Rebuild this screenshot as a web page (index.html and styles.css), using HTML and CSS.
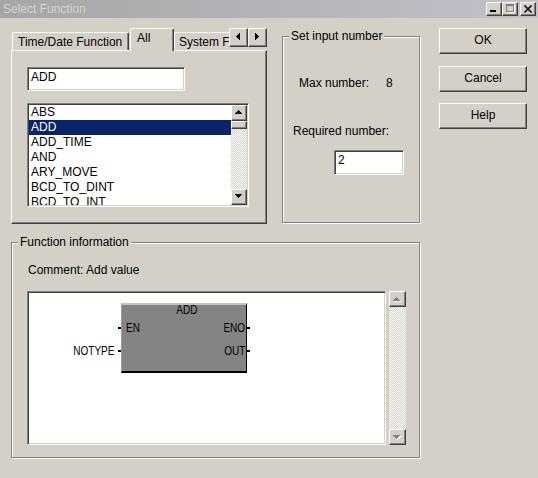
FILE: index.html
```html
<!DOCTYPE html>
<html>
<head>
<meta charset="utf-8">
<title>Select Function</title>
<link rel="stylesheet" href="styles.css">
</head>
<body>
<div class="titlebar">
  <span class="title">Select Function</span>
  <div class="tbtns">
    <span class="tbtn raised"><svg width="14" height="12" shape-rendering="crispEdges"><rect x="3" y="7" width="6" height="2" fill="#000"/></svg></span>
    <span class="tbtn raised"><svg width="14" height="12" shape-rendering="crispEdges"><rect x="4" y="2" width="8" height="1" fill="#fff"/><rect x="11" y="2" width="1" height="8" fill="#fff"/><rect x="4" y="9" width="8" height="1" fill="#fff"/><rect x="3" y="1" width="8" height="2" fill="#808080"/><rect x="3" y="1" width="1" height="8" fill="#808080"/><rect x="10" y="1" width="1" height="8" fill="#808080"/><rect x="3" y="8" width="8" height="1" fill="#808080"/></svg></span>
    <span class="tbtn raised close"><svg width="14" height="12"><path d="M3.5 2.5 L10.5 9.5 M10.5 2.5 L3.5 9.5" stroke="#000" stroke-width="1.6" fill="none"/></svg></span>
  </div>
</div>
<div class="client">
  <div class="leftcol">
    <div class="toprow">
      <div class="tabs">
        <div class="tabstrip">
          <div class="tab t1">Time/Date Function</div>
          <div class="tab t2">All</div>
          <div class="tab t3">System F</div>
          <div class="tabarrow raised"><svg width="17" height="17" shape-rendering="crispEdges"><rect x="6" y="7" width="1" height="1"/><rect x="7" y="6" width="1" height="3"/><rect x="8" y="5" width="1" height="5"/><rect x="9" y="4" width="1" height="7"/></svg></div>
          <div class="tabarrow raised"><svg width="17" height="17" shape-rendering="crispEdges"><rect x="6" y="4" width="1" height="7"/><rect x="7" y="5" width="1" height="5"/><rect x="8" y="6" width="1" height="3"/><rect x="9" y="7" width="1" height="1"/></svg></div>
        </div>
        <div class="tabpanel">
          <div class="edit sunken">ADD</div>
          <div class="listbox sunken">
            <ul class="items">
              <li>ABS</li>
              <li class="sel">ADD</li>
              <li>ADD_TIME</li>
              <li>AND</li>
              <li>ARY_MOVE</li>
              <li>BCD_TO_DINT</li>
              <li>BCD_TO_INT</li>
            </ul>
            <div class="vscroll">
              <div class="sbbtn raised"><svg width="14" height="14" shape-rendering="crispEdges"><rect x="6" y="4" width="1" height="1"/><rect x="5" y="5" width="3" height="1"/><rect x="4" y="6" width="5" height="1"/><rect x="3" y="7" width="7" height="1"/></svg></div>
              <div class="thumb raised"></div>
              <div class="track"></div>
              <div class="sbbtn raised"><svg width="14" height="14" shape-rendering="crispEdges"><rect x="3" y="4" width="7" height="1"/><rect x="4" y="5" width="5" height="1"/><rect x="5" y="6" width="3" height="1"/><rect x="6" y="7" width="1" height="1"/></svg></div>
            </div>
          </div>
        </div>
      </div>
      <div class="group setinput">
        <div class="legend">Set input number</div>
        <div class="maxrow"><span class="maxlbl">Max number:</span><span>8</span></div>
        <div class="reqlbl">Required number:</div>
        <div class="numedit sunken">2</div>
      </div>
    </div>
    <div class="group funcinfo">
      <div class="legend">Function information</div>
      <div class="comment">Comment: Add value</div>
      <div class="diagrow">
        <div class="diagram sunken">
          <div class="node">
            <span class="nlabel ntitle">ADD</span>
            <span class="nlabel nin1">EN</span>
            <span class="nlabel nout1">ENO</span>
            <span class="nlabel nout2">OUT</span>
            <span class="nlabel nvar">NOTYPE</span>
            <span class="pin pl p1"></span>
            <span class="pin pl p2"></span>
            <span class="pin pr p1"></span>
            <span class="pin pr p2"></span>
          </div>
        </div>
        <div class="dscroll">
          <div class="dbtn raised"><svg width="15" height="14" shape-rendering="crispEdges"><g fill="#fff"><rect x="7" y="6" width="1" height="1"/><rect x="6" y="7" width="3" height="1"/><rect x="5" y="8" width="5" height="1"/><rect x="4" y="9" width="7" height="1"/></g><g fill="#808080"><rect x="6" y="5" width="1" height="1"/><rect x="5" y="6" width="3" height="1"/><rect x="4" y="7" width="5" height="1"/><rect x="3" y="8" width="7" height="1"/></g></svg></div>
          <div class="track"></div>
          <div class="dbtn raised"><svg width="15" height="14" shape-rendering="crispEdges"><g fill="#fff"><rect x="4" y="6" width="7" height="1"/><rect x="5" y="7" width="5" height="1"/><rect x="6" y="8" width="3" height="1"/><rect x="7" y="9" width="1" height="1"/></g><g fill="#808080"><rect x="3" y="5" width="7" height="1"/><rect x="4" y="6" width="5" height="1"/><rect x="5" y="7" width="3" height="1"/><rect x="6" y="8" width="1" height="1"/></g></svg></div>
        </div>
      </div>
    </div>
  </div>
  <div class="buttons">
    <div class="btn raised">OK</div>
    <div class="btn raised cancel">Cancel</div>
    <div class="btn raised help">Help</div>
  </div>
</div>
</body>
</html>
```
FILE: styles.css
```css
* { box-sizing: border-box; }
html, body { margin: 0; padding: 0; }
body {
  width: 538px;
  height: 478px;
  overflow: hidden;
  background: #d4d0c8;
  font-family: "Liberation Sans", Arial, sans-serif;
  font-size: 12px;
  line-height: 14px;
  color: #000;
}
svg { display: block; }

.raised {
  background: #d4d0c8;
  border: 1px solid;
  border-color: #fff #404040 #404040 #fff;
  box-shadow: inset -1px -1px 0 #808080;
}
.sunken {
  background: #fff;
  border: 1px solid;
  border-color: #808080 #fff #fff #808080;
  box-shadow: inset 1px 1px 0 #404040, inset -1px -1px 0 #d4d0c8;
}

/* title bar */
.titlebar {
  height: 18px;
  display: flex;
  justify-content: space-between;
  align-items: flex-start;
  background: linear-gradient(90deg, #a6a6a6, #c2c0ca);
}
.title { color: #d8d4cc; padding-left: 3px; line-height: 18px; }
.tbtns { display: flex; margin: 2px 2px 0 0; }
.tbtn { width: 16px; height: 14px; }
.tbtn.close { margin-left: 2px; }

/* client */
.client { display: flex; padding: 10px 0 0 11px; }
.leftcol { width: 409px; }
.toprow { display: flex; align-items: flex-start; }

/* tabs */
.tabs { width: 256px; }
.tabstrip { display: flex; align-items: flex-end; height: 22px; }
.tab {
  height: 18px;
  border: 1px solid #fff;
  border-bottom: none;
  border-right-color: #404040;
  box-shadow: inset -1px 0 0 #808080;
  border-radius: 2px 2px 0 0;
  padding: 2px 0 0 5px;
  white-space: nowrap;
  overflow: hidden;
}
.t1 { margin-left: 1px; width: 117px; }
.t2 {
  margin-left: 1px;
  width: 44px;
  height: 23px;
  margin-bottom: -1px;
  position: relative;
  z-index: 1;
  background: #d4d0c8;
  padding: 2px 0 0 6px;
}
.t3 { width: 55px; border-right: none; box-shadow: none; padding-left: 4px; border-radius: 2px 0 0 0; }
.tabarrow { width: 19px; height: 19px; align-self: flex-start; flex: none; }

.tabpanel {
  height: 174px;
  border: 1px solid;
  border-color: #fff #404040 #404040 #fff;
  box-shadow: inset -1px -1px 0 #808080;
  padding: 16px 0 0 15px;
}
.edit { width: 158px; height: 24px; padding: 2px 3px 0; }
.listbox {
  margin-top: 12px;
  width: 222px;
  height: 104px;
  padding: 1px;
  display: flex;
}
.items {
  flex: 1;
  list-style: none;
  margin: 0;
  padding: 0;
  overflow: hidden;
}
.items li { height: 15px; line-height: 15px; padding-left: 2px; white-space: nowrap; }
.items li.sel { background: #0a246a; color: #fff; }

.vscroll { width: 16px; display: flex; flex-direction: column; flex: none; }
.sbbtn { height: 16px; flex: none; }
.thumb { height: 8px; flex: none; }
.track {
  flex: 1;
  background-color: #fff;
  background-image: repeating-conic-gradient(#d4d0c8 0 25%, #fff 0 50%);
  background-size: 2px 2px;
}

/* group boxes */
.group {
  border: 1px solid #808080;
  box-shadow: inset 1px 1px 0 #fff, 1px 1px 0 #fff;
}
.legend {
  width: fit-content;
  margin: -8px 0 0 6px;
  padding: 0 2px;
  background: #d4d0c8;
  line-height: 14px;
  position: relative;
}
.setinput { margin: 8px 0 0 15px; width: 138px; height: 187px; }
.maxrow { display: flex; margin: 33px 0 0 16px; }
.maxlbl { width: 87px; }
.reqlbl { margin: 34px 0 0 10px; }
.numedit { margin: 12px 0 0 51px; width: 70px; height: 25px; padding: 2px 3px 0; }

.funcinfo { margin-top: 18px; width: 409px; height: 216px; }
.comment { margin: 14px 0 0 16px; }
.diagrow { display: flex; margin: 14px 0 0 15px; }
.diagram { width: 359px; height: 154px; position: relative; }
.dscroll { margin-left: 3px; width: 17px; height: 154px; display: flex; flex-direction: column; }
.dbtn { height: 16px; flex: none; }

/* function block */
.node {
  position: absolute;
  left: 93px;
  top: 11px;
  width: 126px;
  height: 70px;
  background: #848484;
  border-top: 2px solid #c4c4c4;
  border-left: 1px solid #9a9a9a;
  border-right: 1px solid #000;
  border-bottom: 2px solid #000;
  font-family: "Liberation Sans", Arial, sans-serif;
  font-size: 12.5px;
  line-height: 15px;
}
.nlabel { position: absolute; white-space: nowrap; transform: scaleX(0.8); }
.ntitle { top: -2px; left: 0; right: 0; text-align: center; padding-left: 4px; transform-origin: 55% 50%; }
.nin1 { top: 16px; left: 4px; transform-origin: 0 50%; }
.nout1 { top: 16px; right: 1px; transform-origin: 100% 50%; }
.nout2 { top: 39px; right: 1px; transform-origin: 100% 50%; }
.nvar { top: 39px; right: calc(100% + 8px); transform-origin: 100% 50%; }
.pin { position: absolute; width: 3px; height: 2px; background: #000; }
.pl { left: -4px; }
.pr { left: 125px; }
.p1 { top: 22px; }
.p2 { top: 45px; }

/* buttons */
.buttons { margin-left: 19px; width: 88px; }
.btn { height: 26px; line-height: 22px; text-align: center; }
.btn.cancel { margin-top: 12px; }
.btn.help { margin-top: 11px; }
```
